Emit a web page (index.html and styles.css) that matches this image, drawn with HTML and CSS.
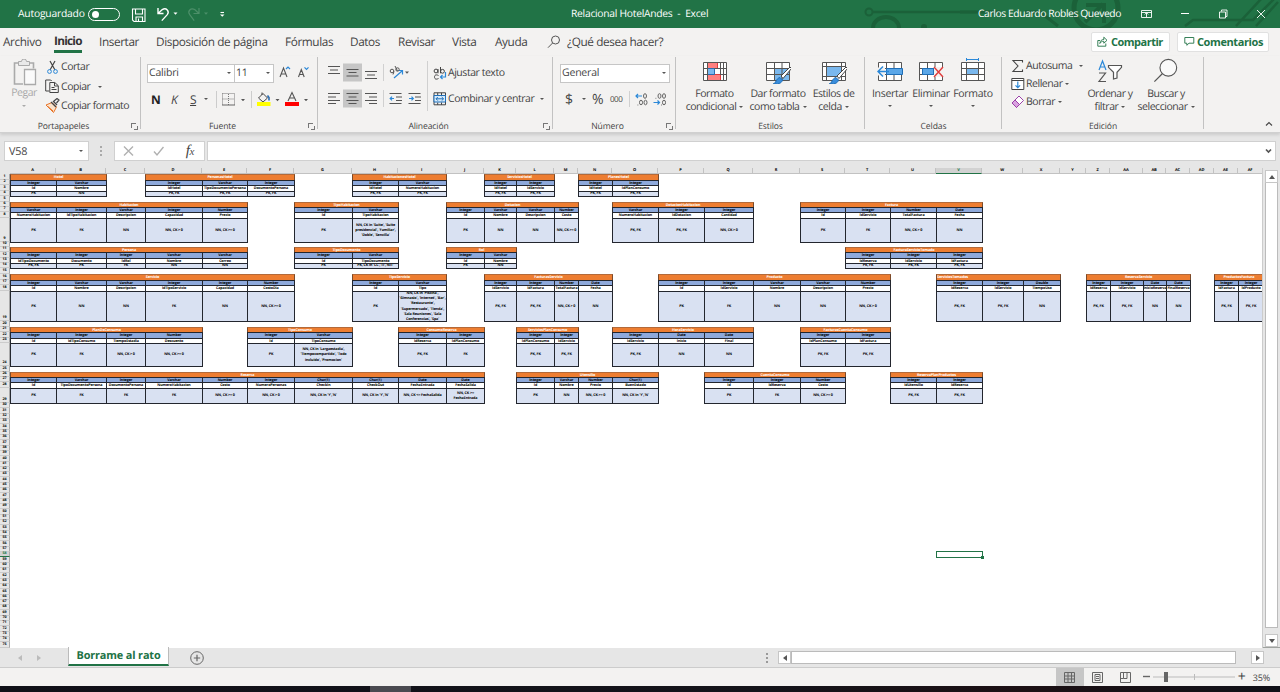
FILE: index.html
```html
<!DOCTYPE html>
<html lang="es">
<head>
<meta charset="utf-8">
<title>Relacional HotelAndes - Excel</title>
<link rel="stylesheet" href="styles.css">
</head>
<body>
<header class="titlebar">
  <svg class="pattern" width="440" height="28" viewBox="840 0 440 28" fill="none" stroke="#1b6139" stroke-width="3">
    <circle cx="869" cy="12" r="3.5" stroke-width="2"/><path d="M873 12H976" stroke-width="2.5"/>
    <path d="M873 28a13 11 0 0 1 26 0" stroke-width="4"/><circle cx="924" cy="27" r="3" fill="#1b6139" stroke="none"/>
    <path d="M960 12h30l10 0M1025 12h15l18 14" stroke-width="3"/><circle cx="1096" cy="8" r="22" stroke-width="5"/>
    <path d="M1085 22l18-18M1086 5h18v18" stroke-width="4"/><path d="M1185 26l8-6h60l22-22M1236 26l26-28M1256 26l22-24" stroke-width="2.5"/>
  </svg>
  <span class="autosave">Autoguardado</span>
  <span class="toggle"></span>
  <svg class="qat" width="110" height="20" viewBox="125 4 110 20" fill="none" stroke="#fff" stroke-width="1.1">
    <path d="M132.5 9h12.500v12.500h-11l-1.500-1.500zM135.500 9v5h7V9M136 21.500v-4.500h6.500v4.500M138.500 21v-2.500"/>
    <path d="M158 8v5.500h5.500M158.300 13.200l4-3.600c4-2.400 7.500 1.800 5 5l-5.500 6" stroke-width="1.4"/>
    <path d="M173.500 12.500h4l-2 2.300z" fill="#fff" stroke="none"/>
    <g stroke="#4c8f69"><path d="M199 8v5.500h-5.500M198.700 13.200l-4-3.600c-4-2.400-7.500 1.800-5 5l4.500 6" stroke-width="1.2"/><path d="M204 12.500h4l-2 2.300z" fill="#4c8f69" stroke="none"/></g>
    <path d="M220.500 12.500h3.500"/><path d="M220 14.500h4.500l-2.200 2.300z" fill="#fff" stroke="none"/>
  </svg>
  <span class="doc">Relacional HotelAndes&nbsp; -&nbsp; Excel</span>
  <span class="user">Carlos Eduardo Robles Quevedo</span>
  <svg class="winctl" width="140" height="28" viewBox="1135 0 140 28" fill="none" stroke="#fff">
    <path d="M1141.500 10.500h10v7h-10zM1141.500 12.500h10M1146.500 17v-4M1144.700 14.500l1.800-1.800 1.800 1.800" stroke-width=".9"/>
    <path d="M1181 13.500h8"/><path d="M1219.500 12h6v6h-6zM1221.500 11.500v-1.500h5.500v6.500h-1.500" stroke-width=".9"/>
    <path d="M1257 10l8 8M1265 10l-8 8" stroke-width=".9"/>
  </svg>
</header>

<nav class="tabs">
  <span>Archivo</span><span class="on">Inicio</span><span>Insertar</span><span>Disposición de página</span><span>Fórmulas</span><span>Datos</span><span>Revisar</span><span>Vista</span><span>Ayuda</span>
  <svg width="14" height="14" fill="none" stroke="#555" viewBox="0 0 14 14"><circle cx="8.500" cy="5" r="4"/><path d="M5.600 8L1 12.700"/></svg>
  <span>¿Qué desea hacer?</span>
  <button class="share"><svg width="11" height="11" viewBox="0 0 11 11" fill="none" stroke="#217346"><path d="M3 4.500H.8v5.700h8V7.500M2.800 7.500c.4-3 2-4 4-4V1.200L10 4.300 6.800 7.200V5.300c-2 0-3 .6-4 2.200z" stroke-width=".9"/></svg>Compartir</button>
  <button class="comment"><svg width="11" height="11" viewBox="0 0 11 11" fill="none" stroke="#217346"><path d="M.8 1.500h9v5.700H5L2.800 9.300V7.200h-2z" stroke-width=".9"/></svg>Comentarios</button>
</nav>

<section class="ribbon">
  <div class="group clip">
    <div class="body">
      <div class="paste">
        <svg width="26" height="27" viewBox="13 59 26 27" fill="none" stroke="#aaa"><path d="M25 84H16.500V63H21M31 63h4.500v5.500" fill="none" stroke-width="1.600"/><path d="M20.500 65.500v-4h3a2 2 0 0 1 5 0h3v4z" fill="#e9e9e9"/><path d="M26.500 69.500h11v15h-11z" fill="#fafafa" stroke-width="1.300"/></svg>
        <span>Pegar</span><i class="car"></i>
      </div>
      <div class="cliprows">
        <div><svg width="15" height="15" viewBox="0 0 15 15" fill="none"><path d="M5 1l5 9M10 1L5 10" stroke="#444" stroke-width="1.200"/><circle cx="4.500" cy="11.500" r="1.900" stroke="#2b88d8"/><circle cx="10.500" cy="11.500" r="1.900" stroke="#2b88d8"/></svg><span>Cortar</span></div>
        <div><svg width="15" height="15" viewBox="0 0 15 15" fill="#f3f2f1" stroke="#444"><path d="M4 12H.7V1h5l1 1"/><path d="M4.800 3.500h5l3.500 3.200v6.800H4.800zM9.500 3.700V7h3.600M6.500 8.500h3M6.500 10.500h5"/></svg><span>Copiar</span><i class="car"></i></div>
        <div><svg width="15" height="15" viewBox="0 0 15 15" fill="none"><path d="M1 7l6-2.500 4.500 4.500-3 5.500z" fill="#fbe3cb" stroke="#e8752a"/><path d="M3 8.500l5 4.500" stroke="#e8752a"/><path d="M6 4l5 5M8 3l4 4M9 3l3-2.500L14 2l-2.500 3" stroke="#444" stroke-width="1.200"/></svg><span>Copiar formato</span></div>
      </div>
    </div>
    <div class="label">Portapapeles<b class="dlg"></b></div>
  </div>

  <div class="group font">
    <div class="body col">
      <div class="row r1"><span class="box name">Calibri<i class="car"></i></span><span class="box size">11<i class="car"></i></span>
        <svg width="34" height="18" viewBox="277 64 34 18" fill="none" stroke="#555"><path d="M280 77l3.500-9 3.500 9M281.300 74h4.400M298.500 77l2.800-7.500 2.900 7.500M299.500 74.500h3.700" stroke-width="1.100"/><path d="M286 69l2-2 2 2M304.500 67.300l2 2 2-2" stroke="#2b88d8" stroke-width="1.200"/></svg></div>
      <div class="row r2"><b>N</b><em>K</em><u>S</u><i class="car"></i>
        <svg width="96" height="20" viewBox="215 89 96 20" fill="none"><path d="M216.500 91v17M251.500 91v17" stroke="#ccc"/><path d="M222.500 93.500h12v11M228.500 94v11M222.500 93.500v11M222.500 99h12" stroke="#777" stroke-dasharray="1 1"/><path d="M222 105h13" stroke="#666"/><path d="M241 99h4l-2 2.200zM275.500 99h4l-2 2.200zM304 99h4l-2 2.200z" fill="#555"/><path d="M258.500 98l4.500-4.500 4.500 4.500-4.500 4zM262 95v-2.500" stroke="#444"/><path d="M267.500 95.500l1.500 2v3" stroke="#2b6cb0" stroke-width="1.600"/><path d="M257 102h13.500v4H257z" fill="#ffff00"/><path d="M288 101l4-8.500 4 8.500M289.500 98h5" stroke="#555" stroke-width="1.100"/><path d="M285 102h14v4h-14z" fill="#f00"/></svg></div>
    </div>
    <div class="label">Fuente<b class="dlg"></b></div>
  </div>

  <div class="group align">
    <div class="body">
      <svg width="110" height="54" viewBox="323 58 110 54" fill="none" stroke="#555">
        <path d="M343 63.500h19v18h-19zM343 89.500h19v18h-19z" fill="#c6c6c6" stroke="none"/>
        <path d="M328 66.500h12M330 70h8M328 73.500h12M346.500 69.500h12M348.500 72.500h8M346.500 76h12M365 71.500h12M367 75h8M365 78.500h12M328 93.500h12M328 97h8M328 100.500h12M328 103.500h8M346.500 93.500h12M348.500 97h8M346.500 100.500h12M348.500 103.500h8M365 93.500h12M369 97h8M365 100.500h12M369 103.500h8M389.500 93.500h12M396 97h6M396 100.500h6M389.500 103.500h12M408.500 93.500h12M415 97h6M415 100.500h6M408.500 103.500h12"/>
        <path d="M383.500 64v17M383.500 90v17M427.500 61v50" stroke="#d0d0d0"/>
        <path d="M394 98.500h-4M392 96.700l-1.800 1.800 1.800 1.800M409 98.500h4M411.500 96.700l1.800 1.800-1.800 1.800M394 78l8-7M398.500 70.500h4v4" stroke="#2b88d8" stroke-width="1.200"/>
        <circle cx="392" cy="71" r="1.800"/><path d="M394 71.500l-1 3M395 66l2.500 5"/><circle cx="397.500" cy="69.500" r="1.700"/><path d="M405 71.500h4l-2 2.300z" fill="#555" stroke="none"/>
      </svg>
      <div class="wraps">
        <div><svg width="14" height="15" viewBox="0 0 14 15" fill="none" stroke="#444"><circle cx="3" cy="5" r="1.900"/><path d="M5 3v4.300M7.500 1v6.300"/><circle cx="9.500" cy="5.300" r="1.900"/><path d="M5.500 9.500c-3-1.500-4 0-4 1.500s1 3 4 1.500"/><path d="M12.500 6v5H7.500M9.500 9l-2 2 2 2" stroke="#2b88d8" stroke-width="1.200"/></svg><span>Ajustar texto</span></div>
        <div><svg width="14" height="14" viewBox="0 0 14 14" fill="none"><path d="M1 .8h11.500v12H1zM4.700.8v2.500M8.500.8v2.500M4.700 10.500v2.300M8.500 10.500v2.300" stroke="#444"/><path d="M1 3.500h11.500v6.500H1z" fill="#d7ebfb" stroke="#1f6fb8"/><path d="M3 6.800h7.500M4.800 5L3 6.800l1.800 1.800M8.700 5l1.800 1.800-1.800 1.800" stroke="#1f6fb8"/></svg><span>Combinar y centrar</span><i class="car"></i></div>
      </div>
    </div>
    <div class="label">Alineación<b class="dlg"></b></div>
  </div>

  <div class="group num">
    <div class="body col">
      <div class="row r1"><span class="box gen">General<i class="car"></i></span></div>
      <div class="row r2"><span class="cur">$</span><i class="car"></i><span class="pct">%</span><span class="mil">000</span>
        <svg width="42" height="20" viewBox="628 89 42 20" fill="none" stroke="#555"><path d="M629.500 91v16" stroke="#d0d0d0"/><g stroke-width=".9"><ellipse cx="645" cy="96" rx="1.500" ry="2.300"/><ellipse cx="641" cy="102.500" rx="1.500" ry="2.300"/><ellipse cx="645.500" cy="102.500" rx="1.500" ry="2.300"/><ellipse cx="659.500" cy="96" rx="1.500" ry="2.300"/><ellipse cx="664" cy="96" rx="1.500" ry="2.300"/><ellipse cx="664" cy="102.500" rx="1.500" ry="2.300"/><path d="M637.500 105h.8M655.500 98.300h.8M661 105h.8"/></g><path d="M642 96h-6M638 94l-2 2 2 2M653.500 102.500h6M657.500 100.500l2 2-2 2" stroke="#2b88d8" stroke-width="1.200"/></svg></div>
    </div>
    <div class="label">Número<b class="dlg"></b></div>
  </div>

  <div class="group styles">
    <div class="body big">
      <div><svg width="26" height="26" viewBox="0 0 26 26" fill="none"><path d="M1.500 4.500h23v18h-23z" fill="#fff"/><path d="M5.500 4.500h10v6h-10zM5.500 16.500h13v6h-13z" fill="#ff8080" stroke="#e03c3c"/><path d="M5.500 10.500h7v6h-7z" fill="#7ab8ee" stroke="#2b6cb0"/><path d="M1.500 4.500h23v18h-23zM1.500 10.500h4M12.500 10.500h12M1.500 16.500h4M18 16.500h6M5.500 4.500v18M18.500 4.500v12M21.500 4.500v18" stroke="#555"/></svg><span>Formato</span><span>condicional<i class="car"></i></span></div>
      <div><svg width="26" height="26" viewBox="0 0 26 26" fill="none"><path d="M1.500 4.500h23v18h-23z" fill="#fff"/><path d="M9.500 10.500h15v12h-15z" fill="#7ab8ee"/><path d="M1.500 4.500h23v18h-23zM1.500 10.500h23M1.500 16.500h23M9.500 4.500v18M17 4.500v18" stroke="#555"/><path d="M16 18l9-9 1.500 1.500-8.500 10z" fill="#fff" stroke="#444"/><path d="M8 26c3 0 3-6 7-6.500l2.500 2.500c-1 4-5 4-9.500 4z" fill="#3a8ddb" stroke="#1f6fb8"/></svg><span>Dar formato</span><span>como tabla<i class="car"></i></span></div>
      <div><svg width="26" height="26" viewBox="0 0 26 26" fill="none"><path d="M1.500 4.500h23v18h-23z" fill="#fff"/><path d="M5.500 8.500h15v10h-15z" fill="#7ab8ee"/><path d="M1.500 4.500h23v18h-23zM1.500 8.500h23M1.500 18.500h23M5.500 4.500v18M20.500 4.500v18" stroke="#555"/><path d="M16 18l9-9 1.500 1.500-8.500 10z" fill="#fff" stroke="#444"/><path d="M8 26c3 0 3-6 7-6.500l2.500 2.500c-1 4-5 4-9.500 4z" fill="#3a8ddb" stroke="#1f6fb8"/></svg><span>Estilos de</span><span>celda<i class="car"></i></span></div>
    </div>
    <div class="label">Estilos</div>
  </div>

  <div class="group cells">
    <div class="body big">
      <div><svg width="26" height="26" viewBox="0 0 26 26" fill="none"><path d="M1.500 4.500h23v18h-23zM1.500 10.500h23M1.500 16.500h23M9.500 4.500v18M17 4.500v18" fill="#fff" stroke="#555"/><path d="M9.500 10.500h16v6h-16z" fill="#5ba7e8" stroke="#1f6fb8"/><path d="M0 9.500h8v8H0z" fill="#f3f2f1"/><path d="M12 13.500H1M6 8.500l-5 5 5 5" stroke="#2b88d8" stroke-width="1.500"/></svg><span>Insertar</span><i class="car"></i></div>
      <div><svg width="26" height="26" viewBox="0 0 26 26" fill="none"><path d="M1.500 4.500h23v18h-23zM1.500 10.500h23M1.500 16.500h23M9.500 4.500v18M17 4.500v18" fill="#fff" stroke="#555"/><path d="M4.500 10.500h11v6h-11z" fill="#5ba7e8" stroke="#1f6fb8"/><path d="M16 9h10v10H16z" fill="#f3f2f1"/><path d="M16 9l9 10M25 9l-9 10" stroke="#e03c3c" stroke-width="1.400"/></svg><span>Eliminar</span><i class="car"></i></div>
      <div><svg width="26" height="26" viewBox="0 0 26 26" fill="none"><path d="M1.500 4.500h23v18h-23z" fill="#fff" stroke="#555"/><path d="M6.500 10.500h12v6h-12z" fill="#7ab8ee"/><path d="M1.500 10.500h23M1.500 16.500h23M6.500 4.500v18M18.500 4.500v18" stroke="#555"/><path d="M6.500 1.500h12M6.500 0v3M18.500 0v3" stroke="#2b88d8"/></svg><span>Formato</span><i class="car"></i></div>
    </div>
    <div class="label">Celdas</div>
  </div>

  <div class="group edit">
    <div class="body">
      <div class="editrows">
        <div><svg width="14" height="14" viewBox="0 0 14 14" fill="none" stroke="#444"><path d="M11.500 3.500V1.500H2l5 5.500-5 5.500h9.500v-2" stroke-width="1.100"/></svg><span>Autosuma</span><i class="car"></i></div>
        <div><svg width="14" height="14" viewBox="0 0 14 14" fill="none"><path d="M.8 1.500h12v11H.8zM.8 3.500h12" fill="#fff" stroke="#444"/><path d="M6.800 4.500v6M4.500 8.300l2.300 2.300 2.300-2.300" stroke="#2b88d8" stroke-width="1.200"/></svg><span>Rellenar</span><i class="car"></i></div>
        <div><svg width="14" height="14" viewBox="0 0 14 14" fill="none" stroke="#9b3fa8"><path d="M1 8l7-7 4.500 4.500-7 7z" fill="#fff"/><path d="M1 8l3-3 4.500 4.500-3 3z" fill="#d9a3e0"/></svg><span>Borrar</span><i class="car"></i></div>
      </div>
      <div class="big two">
        <div><svg width="26" height="26" viewBox="0 0 26 26" fill="none"><path d="M2 12L5.500 3 9 12M3.200 9h4.600" stroke="#2b88d8" stroke-width="1.200"/><path d="M2 15h6.500L2 23.500h7" stroke="#555" stroke-width="1.200"/><path d="M11.500 7.500h13v1.800l-4.500 5V20l-3.500 1v-6.700l-5-5z" fill="#fff" stroke="#555" stroke-width="1.200"/></svg><span>Ordenar y</span><span>filtrar<i class="car"></i></span></div>
        <div><svg width="28" height="28" viewBox="0 0 28 28" fill="none" stroke="#555"><circle cx="16.500" cy="10.500" r="9" fill="#fafafa" stroke-width="1.200"/><path d="M10 17L1.500 25.500" stroke-width="1.300"/></svg><span>Buscar y</span><span>seleccionar<i class="car"></i></span></div>
      </div>
    </div>
    <div class="label">Edición</div>
  </div>
  <svg class="collapse" width="8" height="6" viewBox="0 0 8 6" fill="none" stroke="#444" stroke-width="1.100"><path d="M1 4.500L4 1.500l3 3"/></svg>
</section>

<section class="fbar">
  <div class="namebox">V58<i class="car"></i></div>
  <div class="dots"></div>
  <div class="fx"><svg width="42" height="12" viewBox="0 0 42 12" fill="none" stroke="#b0b0b0" stroke-width="1.400"><path d="M2 1.500l9 9M11 1.500l-9 9M32 6.500l3 3.500 6.500-8"/></svg><span><em>f</em><sub>x</sub></span></div>
  <div class="finput"><svg width="7" height="6" viewBox="0 0 7 6" fill="none" stroke="#555" stroke-width="1.700"><path d="M1 1.500l2.500 2.500L6 1.500"/></svg></div>
</section>

<main class="work">
  <div class="sheet" id="sheet"></div>
  <div class="vscroll"><span class="btn"><i class="up"></i></span><span class="thumb"></span><span class="btn"><i class="down"></i></span></div>
</main>

<section class="sheets">
  <i class="left dim"></i><i class="right dim"></i>
  <span class="tab">Borrame al rato</span>
  <svg width="14" height="14" viewBox="0 0 14 14" fill="none" stroke="#666"><circle cx="7" cy="7" r="6.300"/><path d="M7 3.800v6.400M3.800 7h6.400" stroke-width="1.200"/></svg>
  <div class="grip"></div>
  <div class="hscroll"><span class="btn"><i class="left"></i></span><span class="thumb"></span><span class="btn"><i class="right"></i></span></div>
</section>

<footer class="status">
  <span class="view on"><svg width="11" height="11" viewBox="0 0 11 11" fill="none" stroke="#666"><path d="M.5.5h10v10H.5zM.5 4h10M.5 7h10M4 .5v10M7.500.5v10"/></svg></span>
  <span class="view"><svg width="11" height="11" viewBox="0 0 11 11" fill="none" stroke="#666"><path d="M.5.5h10v10H.5zM3 2.500h5v6H3zM4 4.500h3M4 6.500h3"/></svg></span>
  <span class="view"><svg width="11" height="11" viewBox="0 0 11 11" fill="none" stroke="#666"><path d="M.5.5h10v10H.5zM3.500.5v6h3.500v-6M3.500 6.500H.5"/></svg></span>
  <svg width="100" height="12" viewBox="1142 671 100 12" fill="none" stroke="#666"><path d="M1143 676.500h7" stroke-width="1.400"/><path d="M1153 677h82M1194.500 674v6" stroke="#bbb"/><path d="M1164 672h4v10h-4z" fill="#666" stroke="none"/></svg>
  <span class="plus">+</span><span class="zoomv">35%</span>
</footer>
<div class="taskbar"><span></span></div>
<script src="sheet.js"></script>
</body>
</html>
```

FILE: styles.css
```css
* { box-sizing: border-box; }
body { margin: 0; width: 1280px; height: 692px; overflow: hidden; display: flex; flex-direction: column; background: #e6e6e6; color: #444; font: 10.5px "Open Sans", "Noto Sans", sans-serif; letter-spacing: -.46px; white-space: nowrap; text-rendering: geometricPrecision; }
svg { flex: none; display: block; }
.car { flex: none; display: inline-block; width: 0; height: 0; border: 2px solid transparent; border-top: 2.5px solid #555; border-bottom: 0; vertical-align: middle; }

.titlebar { position: relative; flex: none; height: 28px; background: #217346; color: #fff; display: flex; align-items: center; padding-left: 18px; font-size: 10.3px; letter-spacing: -.4px; }
.pattern { position: absolute; right: 0; top: 0; }
.titlebar > span { position: relative; }
.titlebar .autosave { width: 70px; letter-spacing: -.2px; }
.toggle { width: 32px; height: 13px; border: 1px solid #fff; border-radius: 7px; }
.toggle::before { content: ""; display: block; width: 7px; height: 7px; margin: 2px 3px; border-radius: 50%; background: #fff; }
.qat { margin-left: 5px; }
.titlebar .doc { margin-left: 336px; width: 407px; letter-spacing: -.27px; }
.user { width: 157px; }
.winctl { position: relative; }

.tabs { flex: none; height: 28px; background: #f3f2f1; display: grid; grid-template-columns: 51px 45px 57px 129px 65px 48px 54px 43px 52px 20px 524px 86px 94px; align-items: center; padding-left: 3px; font-size: 11.8px; letter-spacing: -.4px; }
.tabs .on { font-weight: 700; color: #333; width: 28px; height: 22px; line-height: 20px; border-bottom: 3px solid #217346; letter-spacing: -.75px; }
.tabs button { height: 20px; background: #fff; border: 1px solid #e1e1e1; border-radius: 2px; color: #217346; font: 700 11px "Open Sans", sans-serif; letter-spacing: -.5px; line-height: 16px; display: flex; align-items: center; gap: 3px; padding: 0 5px 1px; margin-right: 7px; }
.tabs .comment { margin-right: 2px; margin-left: 0; padding: 0 6px 1px; letter-spacing: -.4px; gap: 2px; }

.ribbon { flex: none; height: 77px; background: #f3f2f1; border-bottom: 1px solid #d0d0d0; display: grid; grid-template-columns: 141px 177px 235px 123px 189px 137px 202px 1fr; box-shadow: 0 2px 3px #ccc; position: relative; }
.group { display: grid; grid-template-rows: 61px 15px; position: relative; min-width: 0; }
.group::after { content: ""; position: absolute; right: 0; top: 1px; width: 1px; height: 72px; background: #c2c2c2; }
.body { display: flex; min-width: 0; }
.body.col { flex-direction: column; }
.label { font-size: 8.6px; letter-spacing: -.12px; text-align: center; line-height: 18px; position: relative; padding-right: 14px; }
.styles .label, .cells .label, .edit .label { padding-right: 0; }
.dlg { position: absolute; right: 5px; top: 6px; width: 5px; height: 5px; border-left: 1px solid #777; border-top: 1px solid #777; }
.dlg::after { content: ""; position: absolute; left: 2px; top: 2px; width: 3px; height: 3px; border-right: 1px solid #777; border-bottom: 1px solid #777; }
.paste { width: 45px; padding: 3px 0 0 3px; display: flex; flex-direction: column; align-items: center; color: #a9a9a9; }
.paste span { line-height: 14px; }
.paste .car { margin-top: 5px; border-top-color: #aaa; }
.cliprows { display: grid; grid-template-rows: 20px 19px 19px; padding-top: 1px; }
.cliprows div, .wraps div, .editrows div { display: flex; align-items: center; gap: 1px; }
.cliprows .car { margin-left: 7px; }
.row { display: flex; align-items: center; padding-left: 6px; height: 26px; }
.row.r1 { margin-top: 4px; }
.box { height: 19px; background: #fff; border: 1px solid #c6c6c6; display: flex; align-items: center; justify-content: space-between; padding: 0 3px 0 1px; letter-spacing: -.2px; }
.name { width: 88px; }
.size { width: 39px; margin-right: 3px; border-left: 0; }
.font .r2 { font-size: 12px; padding-left: 10px; }
.font .r2 b { width: 20px; color: #222; }
.font .r2 em { width: 19px; }
.font .r2 u { width: 14px; }
.font .r2 .car { margin-right: 7px; }
.align .body > svg { margin: 2px 0 0 5px; }
.wraps { display: grid; grid-template-rows: 26px 26px; padding-top: 4px; }
.wraps .car { margin-left: 5px; }
.gen { width: 110px; }
.num .r1 { padding-left: 7px; }
.num .r2 { padding-left: 12px; font-size: 14px; letter-spacing: -.5px; }
.cur { width: 17px; }
.pct { width: 18px; margin-left: 6px; }
.mil { font-size: 8px; width: 18px; }
.big { display: grid; }
.big > div { display: flex; flex-direction: column; align-items: center; min-width: 0; padding-top: 2px; }
.big span { line-height: 13px; }
.big svg + span { margin-top: 4px; }
.big span .car { margin-left: 3px; }
.big > div > .car { margin-top: 4px; }
.styles .big { grid-template-columns: 77px 50px 61px; }
.cells .big { grid-template-columns: 50px 32px 52px; letter-spacing: -.3px; }
.two { grid-template-columns: 58px 54px; }
.two > div > svg { height: 26px; }
.editrows { flex: none; width: 70px; margin-left: 9px; display: grid; grid-template-rows: 18px 18px 18px; padding-top: 1px; }
.editrows .car { margin-left: 2px; }
.editrows div:first-child .car { margin-left: 6px; }
.collapse { position: absolute; right: 7px; bottom: 5px; }

.fbar { flex: none; height: 35px; display: flex; padding-top: 8px; }
.fbar > div { height: 20px; background: #fff; border: 1px solid #d0d0d0; display: flex; align-items: center; }
.fbar .namebox { margin-left: 4px; width: 85px; justify-content: space-between; padding: 0 5px 0 4px; font-size: 10.8px; letter-spacing: -.2px; }
.fbar .dots { width: 3px; height: 10px; margin: 5px 11px 0; background: none; border: 0; border-left: 2px dotted #aaa; }
.fbar .fx { width: 91px; padding: 0 10px 0 7px; justify-content: space-between; }
.fx span { font: 15px "Liberation Serif", serif; }
.fx sub { font: italic 11px "Liberation Serif", serif; vertical-align: baseline; }
.fbar .finput { flex: 1; margin: 0 4px 0 2px; justify-content: flex-end; padding-right: 3px; }

.work { flex: none; height: 480px; display: flex; border-bottom: 1px solid #9fa39f; }
.sheet { width: 1263px; height: 480px; overflow: hidden; display: grid; background: #fff; border-right: 1px solid #ccc; color: #000; font: 700 3.7px/5px "Open Sans", sans-serif; letter-spacing: -.12px; text-rendering: geometricPrecision; }
.corner, .ch, .rh { background: #e6e6e6; display: flex; align-items: center; justify-content: center; min-width: 0; min-height: 0; }
.ch { border-right: 1px solid #c2c2c2; border-bottom: 1px solid #c2c2c2; font-size: 4px; }
.ch.on, .rh.on { background: #d2d2d2; color: #217346; border-bottom-color: #217346; }
.rh { border-right: 1px solid #aaa; border-bottom: 1px solid #ccc; align-items: flex-end; line-height: 4px; font-size: 3.6px; }
.cell { display: flex; align-items: center; justify-content: center; text-align: center; margin: 0 -1px -1px 0; border: 1px solid #23262e; overflow: hidden; min-width: 0; min-height: 0; }
.title { background: #ed7d31; color: #fff; border-color: #7a4a2a; border-top-color: #b36a3a; }
.title.start { justify-content: flex-start; }
.type { background: #8ea9db; }
.field { background: #fff; }
.rule { background: #d9e1f2; white-space: normal; line-height: 5.3px; }
.sel { border: 1px solid #217346; margin: -1px -1px -1px 0; position: relative; }
.sel::after { content: ""; position: absolute; right: -2px; bottom: -2px; width: 3px; height: 3px; background: #217346; }
.vscroll { width: 17px; padding: 2px 2px 0 2px; display: flex; flex-direction: column; }
.btn { flex: none; width: 13px; height: 13px; background: #fff; border: 1px solid #c6c6c6; display: flex; align-items: center; justify-content: center; }
.vscroll .thumb { height: 447px; margin-bottom: 6px; background: #fff; border: 1px solid #bbb; border-top: 0; }
.up, .down, .left, .right { width: 0; height: 0; border: 3px solid transparent; }
.up { border-bottom: 4px solid #555; border-top: 0; }
.down { border-top: 4px solid #555; border-bottom: 0; }
.left { border-right: 4px solid #555; border-left: 0; }
.right { border-left: 4px solid #555; border-right: 0; }

.sheets { flex: none; height: 20px; display: flex; align-items: center; padding-left: 18px; border-bottom: 1px solid #ccc; }
.sheets .dim { margin-right: 15px; }
.sheets .left.dim { border-right-color: #bbb; }
.sheets .right.dim { border-left-color: #bbb; margin-right: 27px; }
.tab { position: relative; width: 101px; height: 19px; margin-top: -2px; background: #fff; border: 1px solid #bbb; border-top: 0; border-bottom: 2px solid #217346; color: #217346; font-weight: 700; font-size: 10.9px; letter-spacing: -.15px; line-height: 17px; text-align: center; margin-right: 21px; }
.grip { width: 2px; height: 10px; margin-left: 562px; border-left: 2px dotted #999; }
.hscroll { margin-left: 10px; width: 486px; display: flex; }
.hscroll .thumb { flex: 1; margin-right: 15px; height: 13px; background: #fff; border: 1px solid #bbb; }

.status { flex: none; height: 18px; background: #f3f2f1; display: flex; align-items: center; justify-content: flex-end; padding-right: 10px; }
.view { width: 28px; height: 18px; display: flex; align-items: center; justify-content: center; }
.view.on { background: #c6c6c6; }
.status > svg { margin-left: 2px; }
.plus { font-size: 14px; width: 12px; line-height: 14px; margin-left: -4px; }
.zoomv { font-size: 9px; letter-spacing: -.2px; margin-left: 3px; }
.taskbar { flex: none; height: 6px; background: linear-gradient(90deg, #101018 0, #14141a 60%, #1c1014 80%, #101018); }
.taskbar span { display: block; width: 41px; height: 6px; margin-left: 370px; background: #4a4a50; }
```

FILE: sheet.js
```javascript
const sheet = document.getElementById('sheet');
const colEdges = [0, 10, 56, 106, 145, 202, 247, 294, 352, 398, 446, 484, 516, 554, 578, 612, 658, 704, 753, 800, 845, 890, 936, 982, 1023, 1060, 1086, 1110, 1143, 1166, 1190, 1214, 1238, 1263];
const rowEdges = [168, 174, 180, 185, 191, 196, 202, 207, 212, 218, 242, 247, 252, 258, 263, 268, 274, 280, 285, 291, 321, 327, 332, 338, 343, 366, 372, 377, 382, 388, 403];
for (let i = 1; i <= 46; i++) rowEdges.push(Math.round(403 + i * 5.32));
const tracks = e => e.slice(1).map((v, i) => v - e[i] + 'px').join(' ');
sheet.style.gridTemplateColumns = tracks(colEdges);
sheet.style.gridTemplateRows = tracks(rowEdges);

const cols = [];
for (let i = 0; i < 32; i++) cols.push(i < 26 ? String.fromCharCode(65 + i) : 'A' + String.fromCharCode(39 + i));

function put(cls, text, col, row, span = 1) {
  const d = document.createElement('div');
  d.className = cls;
  d.textContent = text;
  d.style.gridArea = `${row} / ${col} / span 1 / span ${span}`;
  sheet.appendChild(d);
}
put('corner', '', 1, 1);
cols.forEach((c, i) => put(c === 'V' ? 'ch on' : 'ch', c, i + 2, 1));
for (let r = 1; r <= 75; r++) put(r === 58 ? 'rh on' : 'rh', r, 1, r + 1);

const I = 'Integer', V = 'Varchar', N = 'Number', D = 'Date', C = 'Char(1)';
const PF = 'PK, FK', G = 'NN, CK > 0', GE = 'NN, CK >= 0', YN = "NN, CK in 'Y','N'";
const tables = [
  ['A', 1, 'Hotel', [I, V], ['Id', 'Nombre'], ['PK', 'NN']],
  ['D', 1, 'PersonasHotel', [I, V, I], ['IdHotel', 'TipoDocumentoPersona', 'DocumentoPersona'], [PF, PF, PF]],
  ['H', 1, 'HabitacionesHotel', [I, V], ['IdHotel', 'NumeroHabitacion'], [PF, PF]],
  ['K', 1, 'ServiciosHotel', [I, I], ['IdHotel', 'IdServicio'], [PF, PF]],
  ['N', 1, 'PlanesHotel', [I, I], ['IdHotel', 'IdPlanConsumo'], [PF, PF]],
  ['A', 6, 'Habitacion', [V, I, V, I, N], ['NumeroHabitacion', 'IdTipoHabitacion', 'Descripcion', 'Capacidad', 'Precio'], ['PK', 'FK', 'NN', G, GE]],
  ['G', 6, 'TipoHabitacion', [I, V], ['Id', 'TipoHabitacion'], ['PK', "NN, CK in 'Suite', 'Suite presidencial', 'Familiar', 'Doble', 'Sencilla'"]],
  ['J', 6, 'Dotacion', [I, V, V, N], ['Id', 'Nombre', 'Descripcion', 'Costo'], ['PK', 'NN', 'NN', GE]],
  ['O', 6, 'DotacionHabitacion', [V, I, I], ['NumeroHabitacion', 'IdDotacion', 'Cantidad'], [PF, PF, G]],
  ['S', 6, 'Factura', [I, I, N, D], ['Id', 'IdServicio', 'TotalFactura', 'Fecha'], ['PK', 'FK', G, 'NN']],
  ['A', 11, 'Persona', [I, I, I, V, V], ['IdTipoDocumento', 'Documento', 'IdRol', 'Nombre', 'Correo'], [PF, 'PK', 'FK', 'NN', 'NN']],
  ['G', 11, 'TipoDocumento', [I, V], ['Id', 'TipoDocumento'], ['PK', "PK, CK in 'CC','TI','NIT'"]],
  ['J', 11, 'Rol', [I, V], ['Id', 'Nombre'], ['PK', 'NN']],
  ['T', 11, 'FacturaServicioTomado', [I, I, I], ['IdReserva', 'IdServicio', 'IdFactura'], [PF, PF, PF]],
  ['A', 16, 'Servicio', [I, V, V, I, I, N], ['Id', 'Nombre', 'Descripcion', 'IdTipoServicio', 'Capacidad', 'CostoDia'], ['PK', 'NN', 'NN', 'FK', 'NN', GE]],
  ['H', 16, 'TipoServicio', [I, V], ['Id', 'Tipo'], ['PK', "NN, CK in 'Piscina', 'Gimnasio', 'Internet', 'Bar', 'Restaurante', 'Supermercado', 'Tienda', 'Sala Reuniones', 'Sala Conferencias', 'Spa'"]],
  ['K', 16, 'FacturasServicio', [I, I, N, D], ['IdServicio', 'IdFactura', 'TotalFactura', 'Fecha'], [PF, PF, G, 'NN']],
  ['P', 16, 'Producto', [I, I, V, V, N], ['Id', 'IdServicio', 'Nombre', 'Descripcion', 'Precio'], ['PK', 'FK', 'NN', 'NN', G]],
  ['V', 16, 'ServiciosTomados', [I, I, 'Double'], ['IdReserva', 'IdServicio', 'TiempoUso'], [PF, PF, 'NN']],
  ['Z', 16, 'ReservaServicio', [I, I, D, D], ['IdReserva', 'IdServicio', 'InicioReserva', 'FinalReserva'], [PF, PF, 'NN', 'NN']],
  ['AE', 16, 'ProductosFactura', [I, I], ['IdFactura', 'IdProducto'], [PF, PF]],
  ['A', 21, 'PlanDeConsumo', [I, I, I, N], ['Id', 'IdTipoConsumo', 'TiempoEstadia', 'Descuento'], ['PK', 'FK', G, GE]],
  ['F', 21, 'TipoConsumo', [I, V], ['Id', 'TipoConsumo'], ['PK', "NN, CK in 'Largaestadia', 'Tiempocompartido', 'Todo incluido', 'Promocion'"]],
  ['I', 21, 'ConsumoReserva', [I, I], ['IdReserva', 'IdPlanConsumo'], [PF, 'FK']],
  ['L', 21, 'ServiciosPlanConsumo', [I, I], ['IdPlanConsumo', 'IdServicio'], [PF, PF]],
  ['O', 21, 'HoraServicio', [I, D, D], ['IdServicio', 'Inicio', 'Final'], [PF, 'NN', 'NN']],
  ['S', 21, 'FacturasCuentaConsumo', [I, I], ['IdPlanConsumo', 'IdFactura'], [PF, PF]],
  ['A', 26, 'Reserva', [I, V, I, V, N, I, C, C, D, D], ['Id', 'TipoDocumentoPersona', 'DocumentoPersona', 'NumeroHabitacion', 'Costo', 'NumeroPersonas', 'CheckIn', 'CheckOut', 'FechaEntrada', 'FechaSalida'], ['PK', 'FK', 'FK', 'FK', GE, G, YN, YN, 'NN, CK <= FechaSalida', 'NN, CK >= FechaEntrada']],
  ['L', 26, 'Utensilio', [I, V, N, C], ['Id', 'Nombre', 'Precio', 'BuenEstado'], ['PK', 'NN', GE, YN]],
  ['Q', 26, 'CuentaConsumo', [I, I, N], ['Id', 'IdReserva', 'Costo'], ['PK', 'FK', GE]],
  ['U', 26, 'ReservaPlanProductos', [I, I], ['IdUtensilio', 'IdReserva'], [PF, PF]]
];
for (const [c, r, title, types, fields, rules] of tables) {
  const x = cols.indexOf(c) + 2;
  put(title === 'ServiciosTomados' ? 'cell title start' : 'cell title', title, x, r + 1, types.length);
  types.forEach((t, i) => put('cell type', t, x + i, r + 2));
  fields.forEach((t, i) => put('cell field', t, x + i, r + 3));
  rules.forEach((t, i) => put('cell rule', t, x + i, r + 4));
}
put('sel', '', cols.indexOf('V') + 2, 59);
```
